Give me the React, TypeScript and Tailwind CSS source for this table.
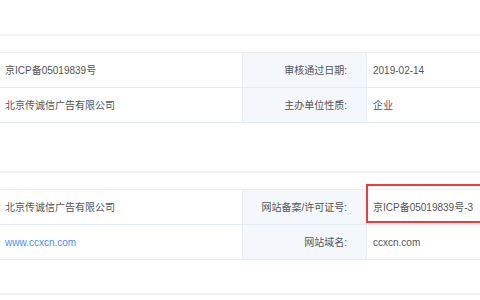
import React from 'react';

interface Row {
  left: React.ReactNode;
  label: string;
  value: React.ReactNode;
  highlight?: boolean;
}

const sectionA: Row[] = [
  { left: '京ICP备05019839号', label: '审核通过日期:', value: '2019-02-14' },
  { left: '北京传诚信广告有限公司', label: '主办单位性质:', value: '企业' },
];

const sectionB: Row[] = [
  {
    left: '北京传诚信广告有限公司',
    label: '网站备案/许可证号:',
    value: '京ICP备05019839号-3',
    highlight: true,
  },
  {
    left: <span className="text-[#4a90f0]">www.ccxcn.com</span>,
    label: '网站域名:',
    value: 'ccxcn.com',
  },
];

function InfoTable({ rows }: { rows: Row[] }) {
  return (
    <div className="border-t border-[#ededed]">
      {rows.map((r, i) => (
        <div key={i} className="flex h-[35px] border-b border-[#e4ecf6]">
          <div className="flex w-[242px] shrink-0 items-center pl-[5px]">{r.left}</div>
          <div className="flex w-[125px] shrink-0 items-center justify-end border-x border-[#e8eef5] bg-[#f4f8fc] pr-[19px]">
            {r.label}
          </div>
          <div className="relative flex flex-1 items-center pl-[6px]">
            {r.value}
            {r.highlight && (
              <div className="absolute -top-[6px] -right-[10px] bottom-[1px] left-[-1px] border-2 border-[#ee3b3b]" />
            )}
          </div>
        </div>
      ))}
    </div>
  );
}

export default function App() {
  return (
    <div
      className="h-[300px] w-[480px] overflow-hidden bg-white text-[10px] text-[#555]"
      style={{ fontFamily: '"Liberation Sans", "Noto Sans CJK SC", sans-serif' }}
    >
      <div className="h-[34px]" />

      {/* section one */}
      <div className="h-[18px] border-t-2 border-[#eef4fa]" />
      <InfoTable rows={sectionA} />

      <div className="h-[48px]" />

      {/* section two */}
      <div className="h-[18px] border-t-2 border-[#eef4fa]" />
      <InfoTable rows={sectionB} />

      <div className="h-[33px]" />
      <div className="border-t-2 border-[#f0f2f5]" />
    </div>
  );
}
